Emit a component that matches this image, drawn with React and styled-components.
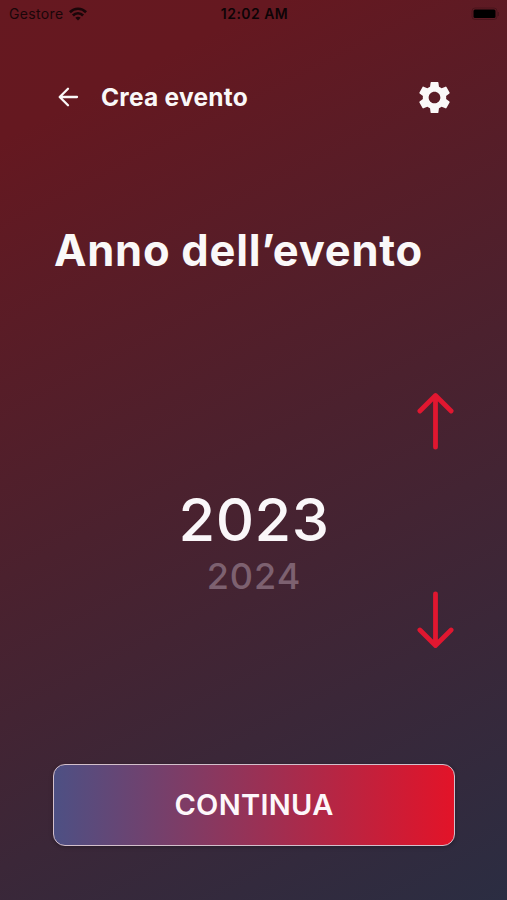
import React from "react";
import styled, { createGlobalStyle } from "styled-components";
import { MdSettings } from "react-icons/md";

const GlobalStyle = createGlobalStyle`
  * {
    box-sizing: border-box;
  }
  body {
    margin: 0;
    font-family: Inter, "Liberation Sans", sans-serif;
  }
`
const Screen = styled.main`
  display: flex;
  flex-direction: column;
  width: 507px;
  height: 900px;
  overflow: hidden;
  color: #faf8f8;
  background: linear-gradient(153deg, #661820 0%, #651820 12%, #4b212e 50%, #2b2d42 100%);
`
const StatusBar = styled.div`
  display: grid;
  grid-template-columns: 1fr auto 1fr;
  align-items: center;
  height: 27px;
  padding: 0 7px 0 9px;
  color: #0d0406;
  font-size: 14px;
`
const Carrier = styled.div`
  display: flex;
  align-items: center;
  gap: 5px;
  letter-spacing: 0.35px;
  opacity: 0.85;
`
const Clock = styled.div`
  font-weight: 600;
  letter-spacing: 0.45px;
`
const Battery = styled.svg`
  justify-self: end;
`
const Header = styled.header`
  display: flex;
  align-items: center;
  height: 40px;
  margin-top: 50px;
  padding: 0 53px 0 58px;
`
const HeaderTitle = styled.h2`
  flex: 1;
  margin: 0 0 0 22px;
  font-size: 24.5px;
  font-weight: 700;
  letter-spacing: 0.25px;
`
const IconButton = styled.button`
  display: flex;
  padding: 0;
  border: 0;
  background: none;
  color: inherit;
`
const Title = styled.h1`
  margin: 107px 0 0 54px;
  font-size: 43.5px;
  line-height: 52px;
  font-weight: 700;
  letter-spacing: 0.75px;
  white-space: nowrap;
`
const Picker = styled.section`
  display: grid;
  grid-template-columns: 1fr auto 1fr;
  height: 257px;
  margin-top: 116px;
  padding: 0 53px;
`
const Years = styled.div`
  grid-column: 2;
  display: flex;
  flex-direction: column;
  align-items: center;
  padding: 93px 0 0 1px;
`
const Year = styled.div`
  font-size: ${props => props.$current ? "59.5px" : "36px"};
  line-height: ${props => props.$current ? "68px" : "46px"};
  font-weight: 500;
  letter-spacing: ${props => props.$current ? "0.5px" : "1px"};
  color: ${props => props.$current ? "#faf7f9" : "#7d6170"};
`
const Arrows = styled.div`
  display: flex;
  flex-direction: column;
  justify-content: space-between;
  align-items: flex-end;
  color: #e01730;
`
const ContinueButton = styled.button`
  height: 82px;
  margin: 115px 52px 0 53px;
  padding: 0 0 2px;
  border: 1.5px solid #d3bfcb;
  border-radius: 12px;
  background: linear-gradient(90deg, #4d5084, #e31328) border-box;
  box-shadow: 0 1px 4px rgba(0, 0, 0, 0.3);
  color: #fdf7fa;
  font-family: inherit;
  font-size: 29px;
  font-weight: 600;
  letter-spacing: 0.3px;
`

const WifiIcon = () => (
  <svg width="18" height="14" viewBox="0 0 18 14" fill="none" stroke="currentColor" strokeWidth="2.7">
    <path d="M0.9 5.2C5.4 0.6 12.6 0.6 17.1 5.2" />
    <path d="M3.9 8.5C6.8 5.5 11.2 5.5 14.1 8.5" />
    <path d="M9 13.4L6.3 10.7C7.8 9.3 10.2 9.3 11.7 10.7Z" fill="currentColor" stroke="none" />
  </svg>
)

const BackIcon = () => (
  <svg width="21" height="20" viewBox="0 0 21 20" fill="none" stroke="currentColor" strokeWidth="2.3" strokeLinecap="round" strokeLinejoin="round">
    <path d="M19 10H2M10 1.7L1.7 10L10 18.3" />
  </svg>
)

const ArrowIcon = ({ down }) => (
  <svg width="37" height="58" viewBox="0 0 37 58" fill="none" stroke="currentColor" strokeWidth="4.8" strokeLinecap="round" strokeLinejoin="round">
    <path d={down ? "M18.5 2.8V54M2.9 39L18.5 54.5L34.1 39" : "M18.5 55.2V4M2.9 19L18.5 3.5L34.1 19"} />
  </svg>
)

const App = () => {
  const years = [2023, 2024];

  return (
    <Screen>
      <GlobalStyle />
      <StatusBar>
        <Carrier>
          Gestore
          <WifiIcon />
        </Carrier>
        <Clock>12:02 AM</Clock>
        <Battery width="30" height="14" viewBox="0 0 30 14">
          <rect x="2" y="1" width="25" height="11.5" rx="3" fill="none" stroke="#000" strokeOpacity="0.2" />
          <rect x="3.5" y="2.5" width="22" height="8.5" rx="1.5" fill="#000" />
          <path d="M28.3 5V9" stroke="#000" strokeOpacity="0.25" />
        </Battery>
      </StatusBar>
      <Header>
        <IconButton aria-label="Indietro"><BackIcon /></IconButton>
        <HeaderTitle>Crea evento</HeaderTitle>
        <IconButton aria-label="Impostazioni"><MdSettings size={39} /></IconButton>
      </Header>
      <Title>Anno dell’evento</Title>
      <Picker>
        <Years>
          {years.map((year, i) => (
            <Year key={year} $current={i === 0}>{year}</Year>
          ))}
        </Years>
        <Arrows>
          <ArrowIcon />
          <ArrowIcon down />
        </Arrows>
      </Picker>
      <ContinueButton>CONTINUA</ContinueButton>
    </Screen>
  );
};

export default App;
